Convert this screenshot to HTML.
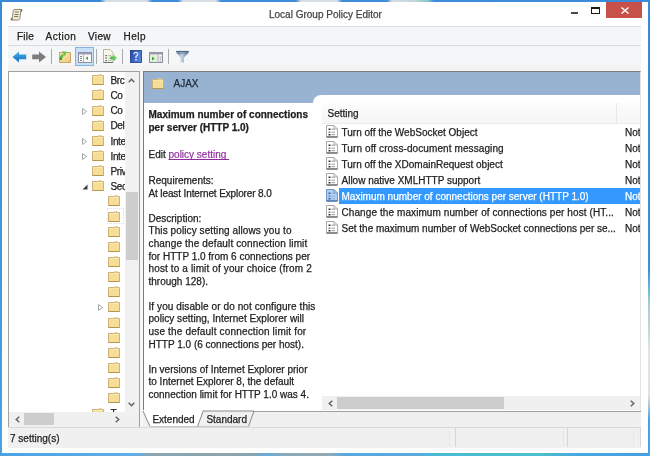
<!DOCTYPE html>
<html><head><meta charset="utf-8">
<style>
*{margin:0;padding:0;box-sizing:border-box}
html,body{width:650px;height:456px;overflow:hidden;background:#3b8ee0;font-family:"Liberation Sans",sans-serif;font-size:10px;color:#000}
svg{position:absolute;overflow:visible}
div{position:absolute}
.t{white-space:nowrap;line-height:12px;color:#1e1e1e;-webkit-text-stroke:0.25px}
.sep{top:49px;width:1px;height:15px;background:#a9a9a9}
.d{left:148.5px;white-space:nowrap;color:#1e1e1e;line-height:12px;-webkit-text-stroke:0.25px}
</style></head><body>
<div style="left:0;top:0;width:650px;height:456px;will-change:transform;background:linear-gradient(#3a89da,#4ba1e3)">
<div style="left:2px;top:2px;width:646px;height:451px;background:#fff"></div>
<div style="left:648px;top:0;width:2px;height:456px;background:linear-gradient(#3a89da 0px,#3f8fdc 270px,#6cb6d8 288px,#a6cdd2 305px,#c2d8da 330px,#dfe5e6 350px,#dde3e4 395px,#8cbce0 410px,#4aa0e2 420px,#4ba1e3 456px)"></div>
<div style="left:0;top:0;width:650px;height:2px;background:linear-gradient(90deg,#3a88da 0px,#3a88da 100px,#d6dde3 106px,#d6dde3 147px,#3f8cdb 152px,#3f8cdb 178px,#d6dde3 183px,#d6dde3 216px,#3f8cdb 221px,#3f8cdb 296px,#d6dde3 301px,#d6dde3 337px,#3f8cdb 342px,#3f8cdb 387px,#d6dde3 392px,#c0d6d8 415px,#8cc4cc 428px,#3f8cdb 434px,#3a8ada 650px)"></div>
<div style="left:0;top:453px;width:650px;height:3px;background:linear-gradient(90deg,#4aa2e4 0px,#62aee8 135px,#8aa6b2 150px,#8ca4ac 250px,#6aaad8 265px,#8eaab6 290px,#92aab4 330px,#58a8e2 345px,#5aaae0 415px,#48bcd2 440px,#4cc0cc 540px,#48a8e0 575px,#45a0e2 650px)"></div>
<svg style="left:10px;top:8px" width="13" height="13" viewBox="0 0 13 13">
 <path d="M4 1.5 H11 Q12.5 1.5 12 3 Q11.5 3.8 10.8 3.5 L9.8 10.5 Q9.5 12 8 12 H1.8 Q0.5 12 0.8 10.8 Q1.2 10 2.2 10.3 L3.2 3 Q3.4 1.5 4 1.5 Z" fill="#f4eed6" stroke="#857a66" stroke-width="0.9"/>
 <path d="M10.8 3.5 Q11.6 2.2 10.8 1.6" stroke="#5f5a50" stroke-width="1.2" fill="none"/>
 <path d="M2.2 10.3 Q1.6 11.5 2.4 12" stroke="#5f5a50" stroke-width="1.2" fill="none"/>
 <path d="M4.8 4 H9 M4.4 6.5 H8.6 M4.1 8.6 H8.3" stroke="#77705e" stroke-width="1"/>
</svg>
<div class="t" style="left:269px;top:9px;color:#454545">Local Group Policy Editor</div>
<div style="left:571px;top:12px;width:7px;height:2px;background:#2a2a2a;opacity:.85"></div>
<div style="left:591px;top:7px;width:9px;height:7px;border:1px solid #1a1a1a;border-top-width:2px"></div>
<div style="left:606px;top:2px;width:36px;height:16px;background:#c7504a"></div>
<svg style="left:621px;top:7px" width="8" height="7" viewBox="0 0 8 7"><path d="M0.5 0.5 L7.5 6.5 M7.5 0.5 L0.5 6.5" stroke="#fff" stroke-width="1.5"/></svg>
<div style="left:8px;top:26px;width:633px;height:20px;background:#f5f6f7;border-top:1px solid #dfe0e1;border-bottom:1px solid #dcdcdc"></div>
<div class="t" style="left:17px;top:31px;letter-spacing:0.2px">File</div>
<div class="t" style="left:45.5px;top:31px;letter-spacing:0.5px">Action</div>
<div class="t" style="left:88px;top:31px;letter-spacing:0.35px">View</div>
<div class="t" style="left:123.5px;top:31px;letter-spacing:0.5px">Help</div>
<div style="left:8px;top:46px;width:633px;height:20px;background:#f5f6f7"></div>
<div style="left:8px;top:65px;width:633px;height:363px;background:#f0f0f0"></div>
<div style="left:8px;top:65px;width:633px;height:6px;background:#f4f3f1"></div>
<div style="left:140px;top:71px;width:3px;height:356px;background:#f7f7f7"></div>
<svg style="left:12px;top:51px" width="15" height="12" viewBox="0 0 15 12">
 <defs><linearGradient id="gb" x1="0" y1="0" x2="0" y2="1"><stop offset="0" stop-color="#4aaeea"/><stop offset="1" stop-color="#0f70c2"/></linearGradient></defs>
 <path d="M0.5 6 L7 0.5 V3.5 H14.2 V8.3 H7 V11.5 Z" fill="url(#gb)"/>
</svg>
<svg style="left:32px;top:51px" width="15" height="12" viewBox="0 0 15 12">
 <path d="M14 6 L7 0.5 V3.5 H0.2 V8.3 H7 V11.5 Z" fill="#7c7c7c"/>
</svg>
<div class="sep" style="left:51px"></div>
<svg style="left:59px;top:50px" width="13" height="14" viewBox="0 0 13 14">
 <defs><linearGradient id="gu" x1="0" y1="0" x2="1" y2="1"><stop offset="0" stop-color="#faeab8"/><stop offset="1" stop-color="#f2c77a"/></linearGradient>
 <linearGradient id="ga" x1="0" y1="1" x2="1" y2="0"><stop offset="0" stop-color="#2e9a22"/><stop offset="1" stop-color="#7ad85a"/></linearGradient></defs>
 <path d="M0.5 2.5 H11.5 V12.5 H0.5 Z" fill="url(#gu)" stroke="#c7a765" stroke-width="1"/>
 <path d="M1.8 10 Q1.8 6.5 4.6 4.6" stroke="url(#ga)" stroke-width="2.4" fill="none"/>
 <path d="M3.2 1.2 L7.6 1.8 L5.8 6.2 Z" fill="#5cc640"/>
</svg>
<div style="left:75px;top:47px;width:19px;height:19px;background:#c9e1f8;border:1px solid #84b2e2"></div>
<svg style="left:78px;top:52px" width="14" height="11" viewBox="0 0 14 11">
 <rect x="0.5" y="0.5" width="13" height="10" fill="#fbfbfb" stroke="#8d8d9c"/>
 <rect x="0.5" y="0.5" width="13" height="2" fill="#9a9aae"/>
 <path d="M2 4.5 H4 M2 6.5 H4 M2 8.5 H4" stroke="#8a8a8a"/>
 <path d="M5.5 3 V10.5" stroke="#b0b0b0"/>
 <path d="M10 4.5 L7.5 6.3 L10 8.1 Z" fill="#3a9e3a"/>
</svg>
<div class="sep" style="left:96px"></div>
<svg style="left:103px;top:49px" width="15" height="14" viewBox="0 0 15 14">
 <defs><linearGradient id="ge" x1="0" y1="0" x2="1" y2="0"><stop offset="0" stop-color="#3aa83a"/><stop offset="1" stop-color="#8ee27e"/></linearGradient></defs>
 <path d="M0.5 0.5 H7 L10 3.5 V13.5 H0.5 Z" fill="#f9f6ea" stroke="#bdb6a6"/>
 <path d="M0.5 13.5 H10" stroke="#6e6e6e"/>
 <rect x="2.5" y="6" width="1.2" height="1.2" fill="#333"/><rect x="2.5" y="8.5" width="1.2" height="1.2" fill="#333"/><rect x="2.5" y="11" width="1.2" height="1.2" fill="#333"/>
 <path d="M5 6.6 H8.5 M5 9.1 H8 M5 11.6 H8.5" stroke="#b9c4a8"/>
 <path d="M7.5 7.5 H10.5 V5.5 L14 9 L10.5 12.5 V10.5 H7.5 Z" fill="url(#ge)"/>
</svg>
<div class="sep" style="left:122px"></div>
<svg style="left:130px;top:50px" width="12" height="13" viewBox="0 0 12 13">
 <defs><linearGradient id="gh" x1="0" y1="0" x2="1" y2="0.3"><stop offset="0" stop-color="#22409e"/><stop offset="0.5" stop-color="#3f66c8"/><stop offset="1" stop-color="#5580d8"/></linearGradient></defs>
 <rect x="0.5" y="0.5" width="11" height="12" fill="url(#gh)" stroke="#1f3890" stroke-width="0.8"/>
 <path d="M3.8 4.3 Q3.9 2.4 5.8 2.4 Q7.7 2.4 7.7 4.2 Q7.7 5.4 6 6.4 V8" stroke="#d6e2fa" stroke-width="1.4" fill="none"/>
 <rect x="5.2" y="9" width="1.6" height="1.6" fill="#d6e2fa"/>
</svg>
<svg style="left:149px;top:52px" width="14" height="11" viewBox="0 0 14 11">
 <rect x="0.5" y="0.5" width="13" height="10" fill="#fbfbfb" stroke="#8d8d9c"/>
 <rect x="0.5" y="0.5" width="13" height="2" fill="#9a9aae"/>
 <rect x="1" y="3" width="7.5" height="7" fill="#e4f2da"/>
 <path d="M9 3 V10.5" stroke="#a8a8b4"/>
 <path d="M10.5 5 H12.5 M10.5 7 H12.5 M10.5 9 H12.5" stroke="#a0a0aa"/>
 <path d="M3 4.8 L5.8 6.6 L3 8.4 Z" fill="#3a9e3a"/>
</svg>
<div class="sep" style="left:168px"></div>
<svg style="left:176px;top:50px" width="13" height="13" viewBox="0 0 13 13">
 <defs><linearGradient id="gf" x1="0" y1="0" x2="1" y2="0"><stop offset="0" stop-color="#6d8aa2"/><stop offset="0.45" stop-color="#c4d4e2"/><stop offset="1" stop-color="#5f7d96"/></linearGradient></defs>
 <path d="M0.3 1 H12.7 V2.8 Q10 5.5 8 7.8 V12.5 H4.8 V7.8 Q3 5.5 0.3 2.8 Z" fill="url(#gf)"/>
 <path d="M0.5 1.5 H12.5" stroke="#4d6a82" stroke-width="1.2"/>
 <path d="M1.5 3.2 H11.5" stroke="#587690" stroke-width="0.8"/>
</svg>
<div style="left:8px;top:71px;width:132px;height:357px;background:#fff;border:1px solid #a0a0a0"></div>
<div style="left:9px;top:72px;width:115.5px;height:340px;overflow:hidden"><svg style="left:83px;top:2.2px" width="12" height="11" viewBox="0 0 12 11"><path d="M0.5 1.5 H11.5 V10.5 H0.5 Z" fill="#f7de96" stroke="#cdb07a"/><path d="M1 2.5 H11" stroke="#fae7b0"/><path d="M6.5 0.5 H9.5 L10 1.5 H6 Z" fill="#fff7dc" stroke="#d8bd7a" stroke-width="0.6"/><path d="M0.5 10.5 H11.5" stroke="#b8954c"/></svg>
<div class="t" style="left:101.5px;top:3px;letter-spacing:-0.4px">Brc</div>
<svg style="left:83px;top:17.35px" width="12" height="11" viewBox="0 0 12 11"><path d="M0.5 1.5 H11.5 V10.5 H0.5 Z" fill="#f7de96" stroke="#cdb07a"/><path d="M1 2.5 H11" stroke="#fae7b0"/><path d="M6.5 0.5 H9.5 L10 1.5 H6 Z" fill="#fff7dc" stroke="#d8bd7a" stroke-width="0.6"/><path d="M0.5 10.5 H11.5" stroke="#b8954c"/></svg>
<div class="t" style="left:101.5px;top:18px;letter-spacing:-0.4px">Co</div>
<svg style="left:83px;top:32.5px" width="12" height="11" viewBox="0 0 12 11"><path d="M0.5 1.5 H11.5 V10.5 H0.5 Z" fill="#f7de96" stroke="#cdb07a"/><path d="M1 2.5 H11" stroke="#fae7b0"/><path d="M6.5 0.5 H9.5 L10 1.5 H6 Z" fill="#fff7dc" stroke="#d8bd7a" stroke-width="0.6"/><path d="M0.5 10.5 H11.5" stroke="#b8954c"/></svg>
<div class="t" style="left:101.5px;top:33px;letter-spacing:-0.4px">Co</div>
<svg style="left:73px;top:35.5px" width="5" height="7" viewBox="0 0 5 7"><path d="M0.5 0.5 L4.5 3.5 L0.5 6.5 Z" fill="#fff" stroke="#a6a6a6"/></svg>
<svg style="left:83px;top:47.65px" width="12" height="11" viewBox="0 0 12 11"><path d="M0.5 1.5 H11.5 V10.5 H0.5 Z" fill="#f7de96" stroke="#cdb07a"/><path d="M1 2.5 H11" stroke="#fae7b0"/><path d="M6.5 0.5 H9.5 L10 1.5 H6 Z" fill="#fff7dc" stroke="#d8bd7a" stroke-width="0.6"/><path d="M0.5 10.5 H11.5" stroke="#b8954c"/></svg>
<div class="t" style="left:101.5px;top:48px;letter-spacing:-0.4px">Del</div>
<svg style="left:83px;top:62.8px" width="12" height="11" viewBox="0 0 12 11"><path d="M0.5 1.5 H11.5 V10.5 H0.5 Z" fill="#f7de96" stroke="#cdb07a"/><path d="M1 2.5 H11" stroke="#fae7b0"/><path d="M6.5 0.5 H9.5 L10 1.5 H6 Z" fill="#fff7dc" stroke="#d8bd7a" stroke-width="0.6"/><path d="M0.5 10.5 H11.5" stroke="#b8954c"/></svg>
<div class="t" style="left:101.5px;top:64px;letter-spacing:-0.4px">Inte</div>
<svg style="left:73px;top:65.8px" width="5" height="7" viewBox="0 0 5 7"><path d="M0.5 0.5 L4.5 3.5 L0.5 6.5 Z" fill="#fff" stroke="#a6a6a6"/></svg>
<svg style="left:83px;top:77.95px" width="12" height="11" viewBox="0 0 12 11"><path d="M0.5 1.5 H11.5 V10.5 H0.5 Z" fill="#f7de96" stroke="#cdb07a"/><path d="M1 2.5 H11" stroke="#fae7b0"/><path d="M6.5 0.5 H9.5 L10 1.5 H6 Z" fill="#fff7dc" stroke="#d8bd7a" stroke-width="0.6"/><path d="M0.5 10.5 H11.5" stroke="#b8954c"/></svg>
<div class="t" style="left:101.5px;top:79px;letter-spacing:-0.4px">Inte</div>
<svg style="left:73px;top:80.95px" width="5" height="7" viewBox="0 0 5 7"><path d="M0.5 0.5 L4.5 3.5 L0.5 6.5 Z" fill="#fff" stroke="#a6a6a6"/></svg>
<svg style="left:83px;top:93.1px" width="12" height="11" viewBox="0 0 12 11"><path d="M0.5 1.5 H11.5 V10.5 H0.5 Z" fill="#f7de96" stroke="#cdb07a"/><path d="M1 2.5 H11" stroke="#fae7b0"/><path d="M6.5 0.5 H9.5 L10 1.5 H6 Z" fill="#fff7dc" stroke="#d8bd7a" stroke-width="0.6"/><path d="M0.5 10.5 H11.5" stroke="#b8954c"/></svg>
<div class="t" style="left:101.5px;top:94px;letter-spacing:-0.4px">Priv</div>
<svg style="left:83px;top:108.25px" width="12" height="11" viewBox="0 0 12 11"><path d="M0.5 1.5 H11.5 V10.5 H0.5 Z" fill="#f7de96" stroke="#cdb07a"/><path d="M1 2.5 H11" stroke="#fae7b0"/><path d="M6.5 0.5 H9.5 L10 1.5 H6 Z" fill="#fff7dc" stroke="#d8bd7a" stroke-width="0.6"/><path d="M0.5 10.5 H11.5" stroke="#b8954c"/></svg>
<div class="t" style="left:101.5px;top:109px;letter-spacing:-0.4px">Sec</div>
<svg style="left:72.5px;top:112.25px" width="6" height="6" viewBox="0 0 6 6"><path d="M5.5 0.5 V5.5 H0.5 Z" fill="#404040"/></svg>
<svg style="left:99px;top:123.4px" width="12" height="11" viewBox="0 0 12 11"><path d="M0.5 1.5 H11.5 V10.5 H0.5 Z" fill="#f7de96" stroke="#cdb07a"/><path d="M1 2.5 H11" stroke="#fae7b0"/><path d="M6.5 0.5 H9.5 L10 1.5 H6 Z" fill="#fff7dc" stroke="#d8bd7a" stroke-width="0.6"/><path d="M0.5 10.5 H11.5" stroke="#b8954c"/></svg>
<svg style="left:99px;top:138.55px" width="12" height="11" viewBox="0 0 12 11"><path d="M0.5 1.5 H11.5 V10.5 H0.5 Z" fill="#f7de96" stroke="#cdb07a"/><path d="M1 2.5 H11" stroke="#fae7b0"/><path d="M6.5 0.5 H9.5 L10 1.5 H6 Z" fill="#fff7dc" stroke="#d8bd7a" stroke-width="0.6"/><path d="M0.5 10.5 H11.5" stroke="#b8954c"/></svg>
<svg style="left:99px;top:153.7px" width="12" height="11" viewBox="0 0 12 11"><path d="M0.5 1.5 H11.5 V10.5 H0.5 Z" fill="#f7de96" stroke="#cdb07a"/><path d="M1 2.5 H11" stroke="#fae7b0"/><path d="M6.5 0.5 H9.5 L10 1.5 H6 Z" fill="#fff7dc" stroke="#d8bd7a" stroke-width="0.6"/><path d="M0.5 10.5 H11.5" stroke="#b8954c"/></svg>
<svg style="left:99px;top:168.85px" width="12" height="11" viewBox="0 0 12 11"><path d="M0.5 1.5 H11.5 V10.5 H0.5 Z" fill="#f7de96" stroke="#cdb07a"/><path d="M1 2.5 H11" stroke="#fae7b0"/><path d="M6.5 0.5 H9.5 L10 1.5 H6 Z" fill="#fff7dc" stroke="#d8bd7a" stroke-width="0.6"/><path d="M0.5 10.5 H11.5" stroke="#b8954c"/></svg>
<svg style="left:99px;top:184.0px" width="12" height="11" viewBox="0 0 12 11"><path d="M0.5 1.5 H11.5 V10.5 H0.5 Z" fill="#f7de96" stroke="#cdb07a"/><path d="M1 2.5 H11" stroke="#fae7b0"/><path d="M6.5 0.5 H9.5 L10 1.5 H6 Z" fill="#fff7dc" stroke="#d8bd7a" stroke-width="0.6"/><path d="M0.5 10.5 H11.5" stroke="#b8954c"/></svg>
<svg style="left:99px;top:199.15px" width="12" height="11" viewBox="0 0 12 11"><path d="M0.5 1.5 H11.5 V10.5 H0.5 Z" fill="#f7de96" stroke="#cdb07a"/><path d="M1 2.5 H11" stroke="#fae7b0"/><path d="M6.5 0.5 H9.5 L10 1.5 H6 Z" fill="#fff7dc" stroke="#d8bd7a" stroke-width="0.6"/><path d="M0.5 10.5 H11.5" stroke="#b8954c"/></svg>
<svg style="left:99px;top:214.3px" width="12" height="11" viewBox="0 0 12 11"><path d="M0.5 1.5 H11.5 V10.5 H0.5 Z" fill="#f7de96" stroke="#cdb07a"/><path d="M1 2.5 H11" stroke="#fae7b0"/><path d="M6.5 0.5 H9.5 L10 1.5 H6 Z" fill="#fff7dc" stroke="#d8bd7a" stroke-width="0.6"/><path d="M0.5 10.5 H11.5" stroke="#b8954c"/></svg>
<svg style="left:99px;top:229.45px" width="12" height="11" viewBox="0 0 12 11"><path d="M0.5 1.5 H11.5 V10.5 H0.5 Z" fill="#f7de96" stroke="#cdb07a"/><path d="M1 2.5 H11" stroke="#fae7b0"/><path d="M6.5 0.5 H9.5 L10 1.5 H6 Z" fill="#fff7dc" stroke="#d8bd7a" stroke-width="0.6"/><path d="M0.5 10.5 H11.5" stroke="#b8954c"/></svg>
<svg style="left:89px;top:232.45px" width="5" height="7" viewBox="0 0 5 7"><path d="M0.5 0.5 L4.5 3.5 L0.5 6.5 Z" fill="#fff" stroke="#a6a6a6"/></svg>
<svg style="left:99px;top:244.6px" width="12" height="11" viewBox="0 0 12 11"><path d="M0.5 1.5 H11.5 V10.5 H0.5 Z" fill="#f7de96" stroke="#cdb07a"/><path d="M1 2.5 H11" stroke="#fae7b0"/><path d="M6.5 0.5 H9.5 L10 1.5 H6 Z" fill="#fff7dc" stroke="#d8bd7a" stroke-width="0.6"/><path d="M0.5 10.5 H11.5" stroke="#b8954c"/></svg>
<svg style="left:99px;top:259.75px" width="12" height="11" viewBox="0 0 12 11"><path d="M0.5 1.5 H11.5 V10.5 H0.5 Z" fill="#f7de96" stroke="#cdb07a"/><path d="M1 2.5 H11" stroke="#fae7b0"/><path d="M6.5 0.5 H9.5 L10 1.5 H6 Z" fill="#fff7dc" stroke="#d8bd7a" stroke-width="0.6"/><path d="M0.5 10.5 H11.5" stroke="#b8954c"/></svg>
<svg style="left:99px;top:274.9px" width="12" height="11" viewBox="0 0 12 11"><path d="M0.5 1.5 H11.5 V10.5 H0.5 Z" fill="#f7de96" stroke="#cdb07a"/><path d="M1 2.5 H11" stroke="#fae7b0"/><path d="M6.5 0.5 H9.5 L10 1.5 H6 Z" fill="#fff7dc" stroke="#d8bd7a" stroke-width="0.6"/><path d="M0.5 10.5 H11.5" stroke="#b8954c"/></svg>
<svg style="left:99px;top:290.05px" width="12" height="11" viewBox="0 0 12 11"><path d="M0.5 1.5 H11.5 V10.5 H0.5 Z" fill="#f7de96" stroke="#cdb07a"/><path d="M1 2.5 H11" stroke="#fae7b0"/><path d="M6.5 0.5 H9.5 L10 1.5 H6 Z" fill="#fff7dc" stroke="#d8bd7a" stroke-width="0.6"/><path d="M0.5 10.5 H11.5" stroke="#b8954c"/></svg>
<svg style="left:99px;top:305.2px" width="12" height="11" viewBox="0 0 12 11"><path d="M0.5 1.5 H11.5 V10.5 H0.5 Z" fill="#f7de96" stroke="#cdb07a"/><path d="M1 2.5 H11" stroke="#fae7b0"/><path d="M6.5 0.5 H9.5 L10 1.5 H6 Z" fill="#fff7dc" stroke="#d8bd7a" stroke-width="0.6"/><path d="M0.5 10.5 H11.5" stroke="#b8954c"/></svg>
<svg style="left:99px;top:320.35px" width="12" height="11" viewBox="0 0 12 11"><path d="M0.5 1.5 H11.5 V10.5 H0.5 Z" fill="#f7de96" stroke="#cdb07a"/><path d="M1 2.5 H11" stroke="#fae7b0"/><path d="M6.5 0.5 H9.5 L10 1.5 H6 Z" fill="#fff7dc" stroke="#d8bd7a" stroke-width="0.6"/><path d="M0.5 10.5 H11.5" stroke="#b8954c"/></svg>
<svg style="left:83px;top:335.5px" width="12" height="11" viewBox="0 0 12 11"><path d="M0.5 1.5 H11.5 V10.5 H0.5 Z" fill="#f7de96" stroke="#cdb07a"/><path d="M1 2.5 H11" stroke="#fae7b0"/><path d="M6.5 0.5 H9.5 L10 1.5 H6 Z" fill="#fff7dc" stroke="#d8bd7a" stroke-width="0.6"/><path d="M0.5 10.5 H11.5" stroke="#b8954c"/></svg>
<div class="t" style="left:101.5px;top:336px;letter-spacing:-0.4px">T</div></div>
<div style="left:107px;top:208px;width:17px;height:16px;border:1px dotted #dedede"></div>
<div style="left:125px;top:72px;width:14px;height:340px;background:#f1f1f1"></div>
<div style="left:125.5px;top:192px;width:12px;height:68px;background:#cdcdcd"></div>
<svg style="left:127.5px;top:78px" width="7" height="5" viewBox="0 0 7 5"><path d="M0.7 4.3 L3.5 1.2 L6.3 4.3" stroke="#606060" stroke-width="1.4" fill="none"/></svg>
<svg style="left:127.5px;top:402px" width="7" height="5" viewBox="0 0 7 5"><path d="M0.7 0.7 L3.5 3.8 L6.3 0.7" stroke="#606060" stroke-width="1.4" fill="none"/></svg>
<div style="left:9px;top:412px;width:130px;height:15px;background:#f0f0f0"></div>
<div style="left:24px;top:412.5px;width:30px;height:12px;background:#cdcdcd"></div>
<svg style="left:14.5px;top:415.5px" width="5" height="7" viewBox="0 0 5 7"><path d="M4.3 0.7 L1.2 3.5 L4.3 6.3" stroke="#606060" stroke-width="1.4" fill="none"/></svg>
<svg style="left:114.5px;top:415.5px" width="5" height="7" viewBox="0 0 5 7"><path d="M0.7 0.7 L3.8 3.5 L0.7 6.3" stroke="#606060" stroke-width="1.4" fill="none"/></svg>
<div style="left:143px;top:71px;width:498px;height:341px;background:#fff;border:1px solid #7c7c7c;border-right-color:#e4e4e4;border-bottom:none"></div>
<div style="left:144px;top:72px;width:496px;height:31px;background:#98b3d1"></div>
<svg style="left:152px;top:78px" width="12" height="11" viewBox="0 0 12 11"><path d="M0.5 1.5 H11.5 V10.5 H0.5 Z" fill="#f7de96" stroke="#cdb07a"/><path d="M1 2.5 H11" stroke="#fae7b0"/><path d="M6.5 0.5 H9.5 L10 1.5 H6 Z" fill="#fff7dc" stroke="#d8bd7a" stroke-width="0.6"/><path d="M0.5 10.5 H11.5" stroke="#b8954c"/></svg>
<div class="t" style="left:173.5px;top:77.53px;color:#1e2a3a">AJAX</div>
<div style="left:313px;top:95px;width:327px;height:20px;background:#fff;border-top-left-radius:8px"></div>
<div class="d" style="top:109px;font-weight:bold">Maximum number of connections</div>
<div class="d" style="top:122px;font-weight:bold">per server (HTTP 1.0)</div>
<div class="d" style="top:149px">Edit <span style="color:#8e2a9c;text-decoration:underline;text-decoration-skip-ink:none;-webkit-text-stroke:0.15px">policy setting&nbsp;</span></div>
<div class="d" style="top:175px">Requirements:</div>
<div class="d" style="top:188px;letter-spacing:-0.12px">At least Internet Explorer 8.0</div>
<div class="d" style="top:213px">Description:</div>
<div class="d" style="top:225px;letter-spacing:0.09px">This policy setting allows you to</div>
<div class="d" style="top:238px;letter-spacing:0.14px">change the default connection limit</div>
<div class="d" style="top:251px">for HTTP 1.0 from 6 connections per</div>
<div class="d" style="top:263px;letter-spacing:0.13px">host to a limit of your choice (from 2</div>
<div class="d" style="top:276px">through 128).</div>
<div class="d" style="top:301px;letter-spacing:0.09px">If you disable or do not configure this</div>
<div class="d" style="top:313px;letter-spacing:0.04px">policy setting, Internet Explorer will</div>
<div class="d" style="top:326px;letter-spacing:0.17px">use the default connection limit for</div>
<div class="d" style="top:339px">HTTP 1.0 (6 connections per host).</div>
<div class="d" style="top:364px">In versions of Internet Explorer prior</div>
<div class="d" style="top:376px">to Internet Explorer 8, the default</div>
<div class="d" style="top:389px">connection limit for HTTP 1.0 was 4.</div>
<div style="left:322px;top:103px;width:318px;height:20px;background:linear-gradient(#fcfcfc,#f6f6f6)"></div>
<div class="t" style="left:327.5px;top:108px">Setting</div>
<div style="left:322px;top:123px;width:318px;height:1px;background:#ebebeb"></div>
<div style="left:616px;top:103px;width:1px;height:20px;background:#e8e8e8"></div>
<svg style="left:326px;top:125px" width="12" height="13" viewBox="0 0 12 13"><path d="M0.5 0.5 H8 L11.5 4 V12 H0.5 Z" fill="#fff" stroke="#ababab"/><path d="M8 0.5 V4 H11.5" fill="none" stroke="#ababab"/><path d="M0.5 12 H11.5" stroke="#5a5a5a" stroke-width="1.2"/><rect x="2.5" y="3.5" width="2" height="1.5" fill="#3a3a3a"/><rect x="2.5" y="6.5" width="2" height="1.5" fill="#3a3a3a" opacity=".6"/><rect x="2.5" y="9" width="2" height="1.5" fill="#3a3a3a"/><path d="M5.5 4.2 H8.5 M5.5 7.2 H9 M5.5 9.7 H9" stroke="#9a9a9a"/></svg>
<div class="t" style="left:341.5px;top:127px;color:#1e1e1e">Turn off the WebSocket Object</div>
<div class="t" style="left:625px;top:127px;color:#1e1e1e;width:15px;overflow:hidden">Not</div>
<svg style="left:326px;top:141px" width="12" height="13" viewBox="0 0 12 13"><path d="M0.5 0.5 H8 L11.5 4 V12 H0.5 Z" fill="#fff" stroke="#ababab"/><path d="M8 0.5 V4 H11.5" fill="none" stroke="#ababab"/><path d="M0.5 12 H11.5" stroke="#5a5a5a" stroke-width="1.2"/><rect x="2.5" y="3.5" width="2" height="1.5" fill="#3a3a3a"/><rect x="2.5" y="6.5" width="2" height="1.5" fill="#3a3a3a" opacity=".6"/><rect x="2.5" y="9" width="2" height="1.5" fill="#3a3a3a"/><path d="M5.5 4.2 H8.5 M5.5 7.2 H9 M5.5 9.7 H9" stroke="#9a9a9a"/></svg>
<div class="t" style="left:341.5px;top:143px;color:#1e1e1e;letter-spacing:0.1px">Turn off cross-document messaging</div>
<div class="t" style="left:625px;top:143px;color:#1e1e1e;width:15px;overflow:hidden">Not</div>
<svg style="left:326px;top:157px" width="12" height="13" viewBox="0 0 12 13"><path d="M0.5 0.5 H8 L11.5 4 V12 H0.5 Z" fill="#fff" stroke="#ababab"/><path d="M8 0.5 V4 H11.5" fill="none" stroke="#ababab"/><path d="M0.5 12 H11.5" stroke="#5a5a5a" stroke-width="1.2"/><rect x="2.5" y="3.5" width="2" height="1.5" fill="#3a3a3a"/><rect x="2.5" y="6.5" width="2" height="1.5" fill="#3a3a3a" opacity=".6"/><rect x="2.5" y="9" width="2" height="1.5" fill="#3a3a3a"/><path d="M5.5 4.2 H8.5 M5.5 7.2 H9 M5.5 9.7 H9" stroke="#9a9a9a"/></svg>
<div class="t" style="left:341.5px;top:159px;color:#1e1e1e">Turn off the XDomainRequest object</div>
<div class="t" style="left:625px;top:159px;color:#1e1e1e;width:15px;overflow:hidden">Not</div>
<svg style="left:326px;top:173px" width="12" height="13" viewBox="0 0 12 13"><path d="M0.5 0.5 H8 L11.5 4 V12 H0.5 Z" fill="#fff" stroke="#ababab"/><path d="M8 0.5 V4 H11.5" fill="none" stroke="#ababab"/><path d="M0.5 12 H11.5" stroke="#5a5a5a" stroke-width="1.2"/><rect x="2.5" y="3.5" width="2" height="1.5" fill="#3a3a3a"/><rect x="2.5" y="6.5" width="2" height="1.5" fill="#3a3a3a" opacity=".6"/><rect x="2.5" y="9" width="2" height="1.5" fill="#3a3a3a"/><path d="M5.5 4.2 H8.5 M5.5 7.2 H9 M5.5 9.7 H9" stroke="#9a9a9a"/></svg>
<div class="t" style="left:341.5px;top:175px;color:#1e1e1e">Allow native XMLHTTP support</div>
<div class="t" style="left:625px;top:175px;color:#1e1e1e;width:15px;overflow:hidden">Not</div>
<div style="left:339px;top:188px;width:301px;height:16px;background:#3399ff"></div>
<svg style="left:326px;top:189px" width="12" height="13" viewBox="0 0 12 13"><path d="M0.5 0.5 H8 L11.5 4 V12 H0.5 Z" fill="#b3cff2" stroke="#7096c8"/><path d="M8 0.5 V4 H11.5" fill="none" stroke="#7096c8"/><path d="M0.5 12 H11.5" stroke="#3f6aa0" stroke-width="1.2"/><rect x="2.5" y="3.5" width="2" height="1.5" fill="#2b5d9a"/><rect x="2.5" y="6.5" width="2" height="1.5" fill="#2b5d9a" opacity=".6"/><rect x="2.5" y="9" width="2" height="1.5" fill="#2b5d9a"/><path d="M5.5 4.2 H8.5 M5.5 7.2 H9 M5.5 9.7 H9" stroke="#8fb0d8"/></svg>
<div class="t" style="left:341.5px;top:191px;color:#fff">Maximum number of connections per server (HTTP 1.0)</div>
<div class="t" style="left:625px;top:191px;color:#fff;width:15px;overflow:hidden">Not</div>
<svg style="left:326px;top:205px" width="12" height="13" viewBox="0 0 12 13"><path d="M0.5 0.5 H8 L11.5 4 V12 H0.5 Z" fill="#fff" stroke="#ababab"/><path d="M8 0.5 V4 H11.5" fill="none" stroke="#ababab"/><path d="M0.5 12 H11.5" stroke="#5a5a5a" stroke-width="1.2"/><rect x="2.5" y="3.5" width="2" height="1.5" fill="#3a3a3a"/><rect x="2.5" y="6.5" width="2" height="1.5" fill="#3a3a3a" opacity=".6"/><rect x="2.5" y="9" width="2" height="1.5" fill="#3a3a3a"/><path d="M5.5 4.2 H8.5 M5.5 7.2 H9 M5.5 9.7 H9" stroke="#9a9a9a"/></svg>
<div class="t" style="left:341.5px;top:207px;color:#1e1e1e;letter-spacing:0.09px">Change the maximum number of connections per host (HT...</div>
<div class="t" style="left:625px;top:207px;color:#1e1e1e;width:15px;overflow:hidden">Not</div>
<svg style="left:326px;top:221px" width="12" height="13" viewBox="0 0 12 13"><path d="M0.5 0.5 H8 L11.5 4 V12 H0.5 Z" fill="#fff" stroke="#ababab"/><path d="M8 0.5 V4 H11.5" fill="none" stroke="#ababab"/><path d="M0.5 12 H11.5" stroke="#5a5a5a" stroke-width="1.2"/><rect x="2.5" y="3.5" width="2" height="1.5" fill="#3a3a3a"/><rect x="2.5" y="6.5" width="2" height="1.5" fill="#3a3a3a" opacity=".6"/><rect x="2.5" y="9" width="2" height="1.5" fill="#3a3a3a"/><path d="M5.5 4.2 H8.5 M5.5 7.2 H9 M5.5 9.7 H9" stroke="#9a9a9a"/></svg>
<div class="t" style="left:341.5px;top:223px;color:#1e1e1e">Set the maximum number of WebSocket connections per se...</div>
<div class="t" style="left:625px;top:223px;color:#1e1e1e;width:15px;overflow:hidden">Not</div>
<div style="left:322px;top:396px;width:318px;height:14px;background:#f0f0f0"></div>
<div style="left:337px;top:397px;width:167px;height:12px;background:#cdcdcd"></div>
<svg style="left:327.5px;top:400px" width="5" height="7" viewBox="0 0 5 7"><path d="M4.3 0.7 L1.2 3.5 L4.3 6.3" stroke="#606060" stroke-width="1.4" fill="none"/></svg>
<svg style="left:629.5px;top:400px" width="5" height="7" viewBox="0 0 5 7"><path d="M0.7 0.7 L3.8 3.5 L0.7 6.3" stroke="#606060" stroke-width="1.4" fill="none"/></svg>
<div style="left:143px;top:411px;width:498px;height:1px;background:#a0a0a0"></div>
<svg style="left:142px;top:410px" width="120" height="18" viewBox="0 0 120 18"><path d="M57 1 H112 L106.5 16.5 H55 Z" fill="#f0f0f0" stroke="none"/><path d="M57 1 H112 L106.5 16.5" fill="none" stroke="#8a8a8a"/><path d="M106.5 16.5 H55" fill="none" stroke="#c8c8c8"/><path d="M1 0 V1.5 L8 16.5 H55 L60.5 1.5 V0 Z" fill="#fff" stroke="none"/><path d="M1 1 L8 16.5 M55.5 16.5 L61 1.5" fill="none" stroke="#8a8a8a"/><path d="M8 16.5 H55" fill="none" stroke="#c8c8c8"/></svg>
<div class="t" style="left:152.4px;top:413.73px">Extended</div>
<div class="t" style="left:206.4px;top:413.73px">Standard</div>
<div style="left:8px;top:427px;width:633px;height:21px;background:#f0f0f0;border-top:1px solid #d9d9d9"></div>
<div style="left:455px;top:428px;width:1px;height:19px;background:#d6d6d6"></div>
<div style="left:567px;top:428px;width:1px;height:19px;background:#d6d6d6"></div>
<div style="left:640px;top:428px;width:1px;height:19px;background:#d6d6d6"></div>
<div style="left:449px;top:430px;width:1px;height:17px;background:#e6e6e6"></div>
<div style="left:563px;top:430px;width:1px;height:17px;background:#e6e6e6"></div>
<div style="left:633px;top:430px;width:1px;height:17px;background:#e6e6e6"></div>
<div class="t" style="left:10px;top:433px">7 setting(s)</div>
</div>
</body></html>
